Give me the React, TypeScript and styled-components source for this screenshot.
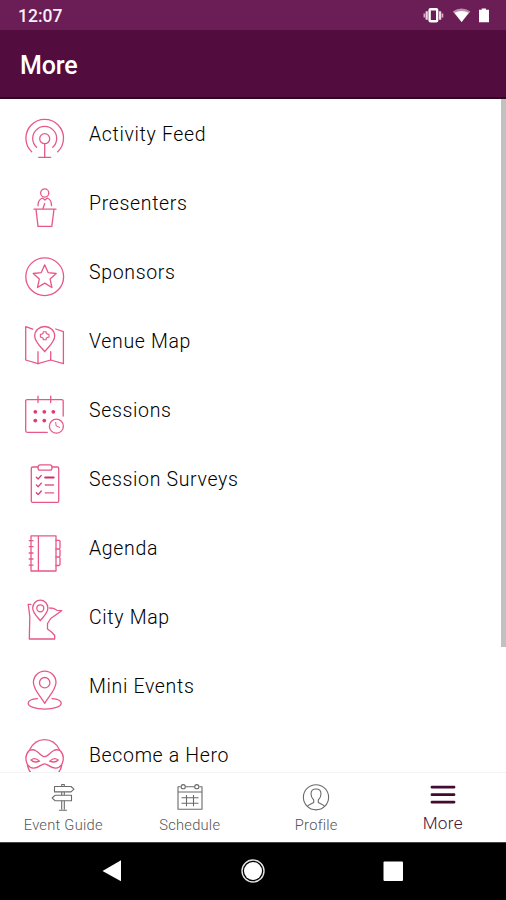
import React from 'react';
import styled, { createGlobalStyle } from 'styled-components';

const GlobalStyle = createGlobalStyle`
  * { box-sizing: border-box; }
  body { margin: 0; background: #fff; font-family: Roboto, sans-serif; }
`;

const Screen = styled.div`
  width: 506px;
  height: 900px;
  display: flex;
  flex-direction: column;
  overflow: hidden;
  background: #fff;
`;

const StatusBar = styled.div`
  flex: none;
  height: 30px;
  display: flex;
  align-items: center;
  justify-content: space-between;
  padding: 2px 17px 0 18px;
  background: #6b1d56;
  color: #f9eef5;
`;

const Clock = styled.span`
  font-size: 17.5px;
  font-weight: 500;
  line-height: 20px;
`;

const StatusIcons = styled.svg`
  width: 70px;
  height: 20px;
`;

const Header = styled.header`
  flex: none;
  height: 69px;
  display: flex;
  align-items: center;
  padding: 5px 20px 0;
  background: #530c3e;
  border-bottom: 2px solid #310722;
`;

const Title = styled.h1`
  margin: 0;
  font-size: 25px;
  line-height: 30px;
  font-weight: 500;
  letter-spacing: -0.1px;
  color: #fff;
`;

const Body = styled.main`
  flex: none;
  height: 673px;
  display: flex;
  overflow: hidden;
`;

const Menu = styled.ul`
  flex: 1;
  margin: 0;
  padding: 0;
  list-style: none;
`;

const MenuItem = styled.li`
  height: 69px;
  display: flex;
  padding: 20px 0 0 25px;
`;

const MenuIcon = styled.svg`
  flex: none;
  width: 40px;
  height: 40px;
  overflow: visible;
  fill: none;
  stroke: #e8578a;
  stroke-width: 1.3;
  stroke-linecap: round;
  stroke-linejoin: round;
`;

const MenuLabel = styled.span`
  margin: 4px 0 0 24px;
  font-size: 19.5px;
  font-weight: 300;
  line-height: 24px;
  letter-spacing: 0.66px;
  color: #000;
  white-space: nowrap;
`;

const ScrollThumb = styled.div`
  width: 5px;
  height: 548px;
  background: #c1c1c1;
`;

const TabBar = styled.nav`
  flex: none;
  height: 70px;
  display: grid;
  grid-template-columns: repeat(4, 1fr);
  border-top: 1px solid #f3f3f3;
  background: #fff;
`;

const Tab = styled.div<{ $active?: boolean }>`
  display: flex;
  flex-direction: column;
  align-items: center;
  padding-top: 10px;
  color: ${(p) => (p.$active ? '#4d1139' : '#555')};
`;

const TabIcon = styled.svg`
  width: 28px;
  height: 30px;
  fill: none;
  stroke: #6a6a6a;
  stroke-width: 1.1;
  stroke-linejoin: round;
`;

const TabLabel = styled.span<{ $active?: boolean }>`
  margin-top: ${(p) => (p.$active ? 0 : 2)}px;
  font-size: ${(p) => (p.$active ? 17.2 : 14.7)}px;
  font-weight: 300;
  line-height: 20px;
  letter-spacing: ${(p) => (p.$active ? 0.3 : 0.25)}px;
`;

const SystemBar = styled.footer`
  flex: 1;
  background: #000;
  border-top: 1px solid #444;
`;

const SystemIcons = styled.svg`
  display: block;
  width: 506px;
  height: 57px;
`;

const items: { label: string; icon: React.ReactNode }[] = [
  {
    label: 'Activity Feed',
    icon: (
      <>
        <path d="M6.7 32.7A18.8 18.8 0 1 1 32.7 32.7" />
        <path d="M11.6 28.3A12 12 0 1 1 27.8 28.3" />
        <circle cx="19.7" cy="19.7" r="5" />
        <path d="M19.7 24.7V38.3M13.7 38.3H25.7" />
      </>
    ),
  },
  {
    label: 'Presenters',
    icon: (
      <>
        <circle cx="19.7" cy="5" r="4.1" />
        <path d="M13 17.7C13 13.5 14.5 11 17.5 10L20 12L22.3 10C25 11 26.5 13.5 26.5 17.7" />
        <path d="M19.7 15.5L18 20.5M9 21.2H31M11 21.2L13 38.3H26.8L29 21.2" />
      </>
    ),
  },
  {
    label: 'Sponsors',
    icon: (
      <>
        <circle cx="19.7" cy="19.7" r="18.9" />
        <path d="M19.7 7.8L23.1 15.6L31.2 16.5L25.1 22.1L26.9 30.5L19.7 26.1L12.5 30.5L14.3 22.1L8.2 16.5L16.3 15.6Z" />
      </>
    ),
  },
  {
    label: 'Venue Map',
    icon: (
      <>
        <path d="M7.7 3.2L.7 .7V34L13 37.7L25.7 34L38.4 37.7V5.7L30.7 3" />
        <path d="M13 25.7V37.7M25.7 25.7V34" />
        <path d="M19.7 25.7C16 20.8 9.7 16.2 9.7 10A10 9.5 0 0 1 29.7 10C29.7 16.2 23.4 20.8 19.7 25.7Z" />
        <path d="M18.2 5.7H21.2V7.2L22.7 8.2H24V11.2H22.7L21.2 12.2V13.7H18.2V12.2L16.7 11.2H15.4V8.2H16.7L18.2 7.2Z" strokeWidth="1.1" />
      </>
    ),
  },
  {
    label: 'Sessions',
    icon: (
      <>
        <path d="M38.2 21V6.2Q38.2 4.7 36.7 4.7H2.2Q.7 4.7 .7 6.2V35.8Q.7 37.3 2.2 37.3H22.3" />
        <path d="M13 1.2V7.5M25.7 1.2V7.5" />
        <g fill="#e23a77" stroke="none">
          <circle cx="10.3" cy="16.8" r="1.9" />
          <circle cx="19.3" cy="16.8" r="1.9" />
          <circle cx="28.3" cy="16.8" r="1.9" />
          <circle cx="10.3" cy="25.6" r="1.9" />
          <circle cx="19.3" cy="25.6" r="1.9" />
        </g>
        <circle cx="31.4" cy="31.2" r="7" />
        <path d="M30.7 27.5L31.2 31L34.6 32.4" strokeWidth="1" />
      </>
    ),
  },
  {
    label: 'Session Surveys',
    icon: (
      <>
        <path d="M13 3H7.6Q6.3 3 6.3 4.3V37Q6.3 38.3 7.6 38.3H32.4Q33.7 38.3 33.7 37V4.3Q33.7 3 32.4 3H27" />
        <rect x="13" y=".8" width="14" height="5.4" rx="2.2" />
        <path d="M11.3 13.2L13.2 15L16.3 11.4M11.3 20.9L13.2 22.7L16.3 19.1M11.3 28.8L13.2 30.6L16.3 27" stroke="#dc3a72" />
        <path d="M20.2 13.4H28.6" stroke="#d62b68" strokeWidth="2" />
        <path d="M20.2 21H28.6M20.2 28.9H28.6" />
      </>
    ),
  },
  {
    label: 'Agenda',
    icon: (
      <>
        <path d="M6 2.8H31V38H6ZM13.4 2.8V38" />
        <path d="M4.2 7.7H8M4.2 13.7H8M4.2 20H8M4.2 26H8M4.2 32.2H8" />
        <path d="M31 7.3H34L35 8.3V15L34 16H31M34 16L35 17V23L34 24H31M34 24L35 25V31.5L34 32.5H31" />
      </>
    ),
  },
  {
    label: 'City Map',
    icon: (
      <>
        <path d="M6 2.3H3.2L4 8L4.8 15L4.3 37H29.7V33.5L27 30.5L22.5 27V21.5L25.7 16.5L36.7 8.7L32 8.3L28.5 6.4L24.7 6" />
        <path d="M15.3 18.7C12.3 14.8 7.7 11 7.7 6A7.6 7.8 0 0 1 22.9 6C22.9 11 18.3 14.8 15.3 18.7Z" />
        <circle cx="15.3" cy="6.3" r="3.5" />
      </>
    ),
  },
  {
    label: 'Mini Events',
    icon: (
      <>
        <path d="M19.7 32.3C16 26 8.4 18.5 8.4 11.5A11.3 11.3 0 0 1 31 11.5C31 18.5 23.4 26 19.7 32.3Z" />
        <circle cx="19.7" cy="11.7" r="5.2" />
        <path d="M12.4 27.6C6 28 3.2 30.2 3.2 32.3C3.2 35.6 10.3 38.1 19.7 38.1S36.2 35.6 36.2 32.3C36.2 30.2 33.4 28 27 27.6" />
      </>
    ),
  },
  {
    label: 'Become a Hero',
    icon: (
      <>
        <path d="M4.7 9.7C8 3.3 13-.3 19.6-.3S31.2 3.3 34.5 9.7" />
        <path d="M4.2 10.5C6.5 9.5 9 9.6 10.8 10.7C14 12.5 16.5 16.7 19.6 16.7S25.2 12.5 28.4 10.7C30.2 9.6 32.7 9.5 35 10.5C37 12.5 38.4 15.5 38.3 18.5C38.2 23 36 28 30.8 28.2C25.5 28.4 23 23.8 19.6 23.8S13.7 28.4 8.4 28.2C3.2 28 1 23 .9 18.5C.8 15.5 2.2 12.5 4.2 10.5Z" />
        <path d="M6 20Q10 16.8 14.5 21.2Q9 23.3 6 20ZM33.2 20Q29.2 16.8 24.7 21.2Q30.2 23.3 33.2 20Z" />
        <path d="M2.5 25.5C3.2 29 4.8 32 8 35M36.7 25.5C36 29 34.4 32 31.2 35" />
      </>
    ),
  },
];

const tabs: { label: string; active?: boolean; icon: React.ReactNode }[] = [
  {
    label: 'Event Guide',
    icon: (
      <>
        <path d="M5.5 3.5H22L25 6.2L22 8.9H5.5ZM22.5 12.2H6.2L3.2 15L6.2 17.8H22.5Z" />
        <path d="M12.7 3.5V1.5H15.3V3.5M12.7 8.9V12.2M15.3 8.9V12.2M12.7 17.8V26.5M15.3 17.8V26.5M10 27.2H18" />
      </>
    ),
  },
  {
    label: 'Schedule',
    icon: (
      <>
        <path d="M4.5 3.8H2V26.3H26V3.8H23.5M9.5 3.8H18.5M2 9H26" />
        <circle cx="7.2" cy="3.7" r="2.1" />
        <circle cx="20.8" cy="3.7" r="2.1" />
        <path d="M5.5 14.8H22.5M5.5 20.3H22.5M10.5 12V23.2M17.5 12V23.2" />
      </>
    ),
  },
  {
    label: 'Profile',
    icon: (
      <>
        <circle cx="14" cy="14.3" r="12.6" />
        <path d="M5.3 23.3C6.5 21.5 9.5 20.8 11.7 19.5V17C9.6 15.2 9 12.8 9 10.8C9 7.7 11 6 14 6S19 7.7 19 10.8C19 12.8 18.4 15.2 16.3 17V19.5C18.5 20.8 21.5 21.5 22.7 23.3" />
      </>
    ),
  },
  {
    label: 'More',
    active: true,
    icon: <path d="M3 4.2H25M3 11.7H25M3 19.2H25" stroke="#430b31" strokeWidth="2.8" strokeLinecap="round" />,
  },
];

export default function App() {
  return (
    <>
      <GlobalStyle />
      <Screen>
        <StatusBar>
          <Clock>12:07</Clock>
          <StatusIcons viewBox="0 0 70 20">
            <rect x="10.6" y="3.3" width="7.6" height="12" rx="1" fill="none" stroke="#fff" strokeWidth="2.4" />
            <path d="M7.7 5.2V13.8M21.1 5.2V13.8" stroke="#ecd5e5" strokeWidth="2.2" />
            <path d="M5.4 7.5V11.5M23.4 7.5V11.5" stroke="#d5abc8" strokeWidth="1.8" />
            <path d="M33.7 5.4Q42.5-.2 51.4 5.4L42.6 16Z" fill="#bd8fae" />
            <path d="M35.5 6.8Q42.6 3.4 49.7 6.8L42.6 16Z" fill="#fff" />
            <path d="M60 3.7H62.7V2.5H67V3.7H70V16.3H60Z" fill="#fff" />
          </StatusIcons>
        </StatusBar>
        <Header>
          <Title>More</Title>
        </Header>
        <Body>
          <Menu>
            {items.map((item) => (
              <MenuItem key={item.label}>
                <MenuIcon viewBox="0 0 40 40">{item.icon}</MenuIcon>
                <MenuLabel>{item.label}</MenuLabel>
              </MenuItem>
            ))}
          </Menu>
          <ScrollThumb />
        </Body>
        <TabBar>
          {tabs.map((tab) => (
            <Tab key={tab.label} $active={tab.active}>
              <TabIcon viewBox="0 0 28 30">{tab.icon}</TabIcon>
              <TabLabel $active={tab.active}>{tab.label}</TabLabel>
            </Tab>
          ))}
        </TabBar>
        <SystemBar>
          <SystemIcons viewBox="0 0 506 57">
            <path d="M102.5 28L121 17.3V38.3Z" fill="#fff" />
            <circle cx="253" cy="28" r="11" fill="none" stroke="#e6e6e6" strokeWidth="1.4" />
            <circle cx="253" cy="28" r="9" fill="#fff" />
            <rect x="383.5" y="18.5" width="19.5" height="19.5" rx="1" fill="#fff" />
          </SystemIcons>
        </SystemBar>
      </Screen>
    </>
  );
}
